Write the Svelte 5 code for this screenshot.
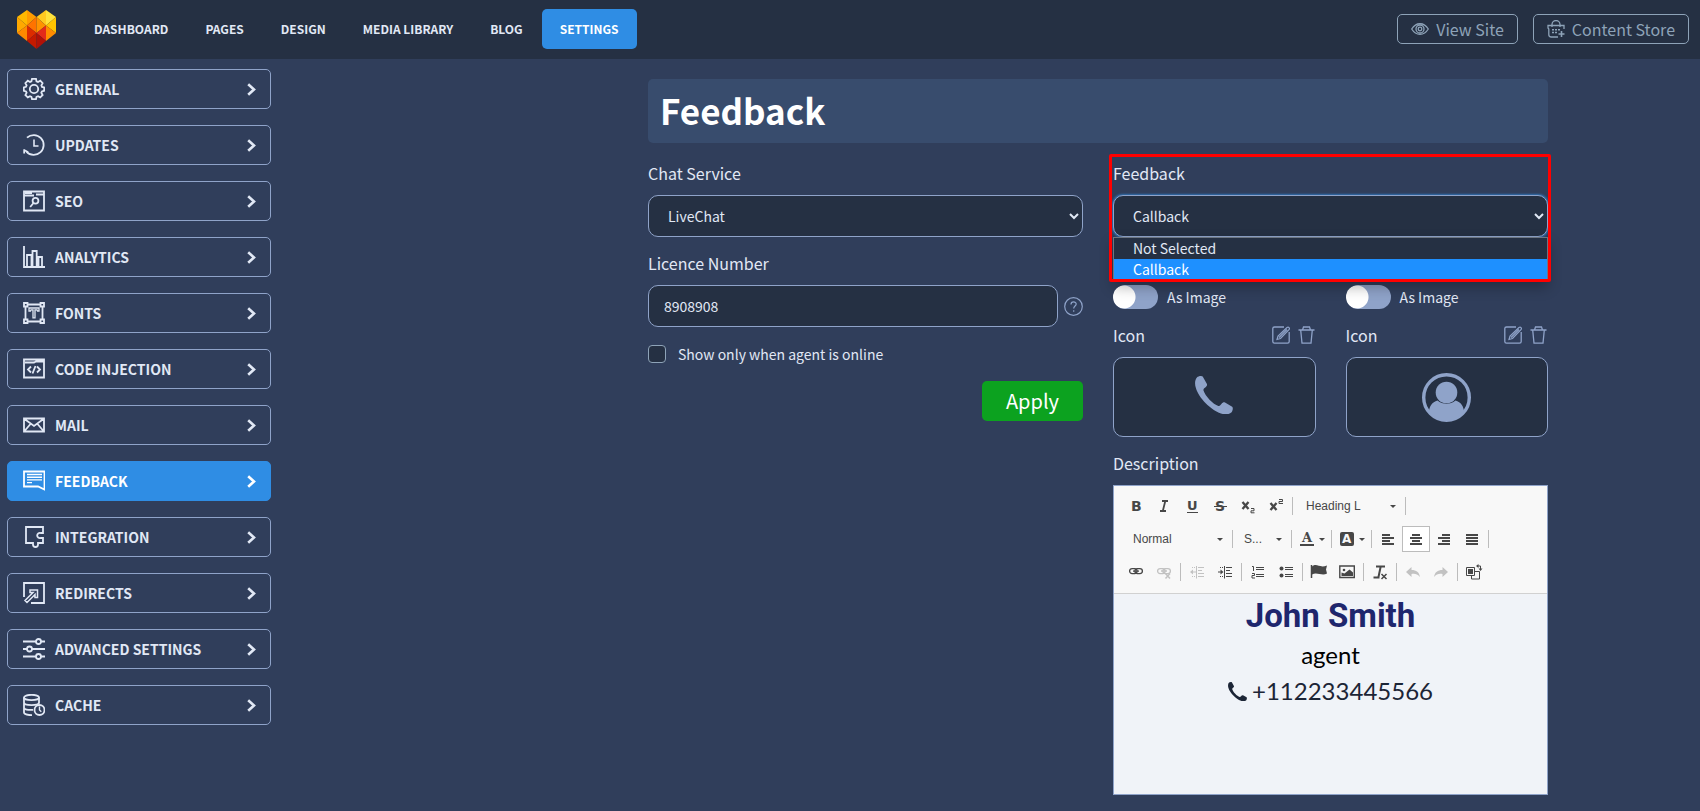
<script>
  const nav = ['Dashboard', 'Pages', 'Design', 'Media Library', 'Blog', 'Settings'];

  const sections = [
    { name: 'General', icon: '<path d="M9 .9h4l.5 2.400 1.500.7 2.300-1.300 2.300 2.400-1.200 2.300.6 1.500 2.200.6v3.200l-2.300.7-.6 1.400 1.300 2.300-2.400 2.300-2.200-1.200-1.500.6-.5 2.300H9l-.6-2.300-1.400-.6-2.200 1.200-2.400-2.300 1.200-2.300-.6-1.400-2.200-.6V9.400l2.200-.6.6-1.500-1.200-2.200 2.400-2.400L7 4l1.400-.7z"/><circle cx="11" cy="11" r="4.200"/>' },
    { name: 'Updates', icon: '<path d="M4 3.700A9.900 9.900 0 1 1 3.600 17.800"/><path d="M1.200 15.300v4.200M1.200 16l4 2.200"/><path d="M11 5.500V12h4.500" stroke-width="1.600"/>' },
    { name: 'SEO', icon: '<path d="M1 1.500h20v19H1zM1 5.500h10M13 4.500h8M2 3.200h7" /><circle cx="12.500" cy="10.800" r="2.900"/><path d="m10.500 13-3.300 4"/>' },
    { name: 'Analytics', icon: '<path d="M1 0v21h21M4 21V9h4.500v12M9.500 21V5h4.200v16M15.500 21V11H19v10"/>' },
    { name: 'Fonts', icon: '<path d="M1 1h3.500v3.500H1zM17.500 1H21v3.500h-3.500zM1 17.500h3.500V21H1zM17.500 17.500H21V21h-3.500zM4.500 2.500h13M4.500 19.500h13M2.500 4.500v13M19.500 4.500v13"/><path d="M6 6h10v3h-1.500l-.5-1.200h-2v8h-2v-8H8L7.500 9H6z" stroke-width="1.300"/>' },
    { name: 'Code Injection', icon: '<path d="M1 1.500h20v18H1zM2 4.500h9l2-1h8" /><path d="m8 8.500-3 3 3 3M14 8.500l3 3-3 3M12.500 8l-3 7.500"/>' },
    { name: 'Mail', icon: '<path d="M1 4.500h20v13H1zM1.500 5l9.500 7 9.500-7M1.500 17l6-7M20.500 17l-6-7"/>' },
    { name: 'Feedback', icon: '<path d="M1 1.500h20.500v18L15 16.500H1z"/><path d="M4 4.500h15M4 7.200h15M4 9.900h15M4 12.600h5" stroke-width="1.400"/>' },
    { name: 'Integration', icon: '<path d="M3 1h17v6h-2.500a2.600 2.600 0 1 0 0 5H20v5h-5v1.500a2.500 2.500 0 0 1-5 0V17H3z"/>' },
    { name: 'Redirects', icon: '<path d="M1 15V1h20v20H8"/><path d="m2 18.500 8-8H7V8h7.500v7.500H12v-3l-8 8z" stroke-width="1.500"/>' },
    { name: 'Advanced Settings', icon: '<path d="M0 3.500h13M18 3.500h4M0 11h4M9 11h13M0 18.500h13M18 18.500h4"/><circle cx="15.500" cy="3.500" r="2.500"/><circle cx="6.500" cy="11" r="2.500"/><circle cx="15.500" cy="18.500" r="2.500"/>' },
    { name: 'Cache', icon: '<ellipse cx="8.500" cy="3.500" rx="7.500" ry="2.700"/><path d="M1 3.500v15c0 1.500 3.500 2.700 8 2.700M16 3.500v6M1 8.500c0 3.500 15 3.500 15 0M1 13.500c0 2 4 2.700 9 2.300"/><circle cx="16.500" cy="16" r="5"/><path d="M16.500 12.500V16l1.800 1.800" stroke-width="1.400"/>' }
  ];

  const text = 'font-family="DejaVu Sans, sans-serif" font-weight="bold" fill="currentColor"';
  const lines = (rows) => rows.map(([x, w], i) => `<path d="M${x} ${4 + i * 3}h${w}" stroke="currentColor" stroke-width="2"/>`).join('');

  const toolbar = [
    [
      { label: 'Bold', icon: `<text x="3" y="13" font-size="14" ${text}>B</text>` },
      { label: 'Italic', icon: `<path d="M6 3h6M4 13h6M9.300 3 6.800 13" stroke="currentColor" stroke-width="1.800"/>` },
      { label: 'Underline', icon: `<text x="3" y="12" font-size="13" ${text}>U</text><path d="M3 14.500h11" stroke="currentColor"/>` },
      { label: 'Strikethrough', icon: `<text x="3" y="13" font-size="14" ${text}>S</text><path d="M2 8.500h13" stroke="currentColor"/>` },
      { label: 'Subscript', icon: `<path d="m2.500 4 6 7M8.500 4l-6 7" stroke="currentColor" stroke-width="2.300"/><path d="M11 10.500h3v2.300h-3v2h3.500" stroke="currentColor"/>` },
      { label: 'Superscript', icon: `<path d="m2.500 5 6 7M8.500 5l-6 7" stroke="currentColor" stroke-width="2.300"/><path d="M11 1.500h3.500v2h-3.500v2h4" stroke="currentColor"/>` },
      { sep: true },
      { combo: 'Heading L', label: 'Font' },
      { sep: true }
    ],
    [
      { combo: 'Normal', label: 'Paragraph format' },
      { sep: true },
      { combo: 'S...', label: 'Size', small: true },
      { sep: true },
      { label: 'Text color', menu: true, icon: `<text x="3" y="11" font-size="13" font-family="DejaVu Serif, serif" font-weight="bold" fill="currentColor">A</text><path d="M1 14h14" stroke="currentColor" stroke-width="2"/>` },
      { sep: true },
      { label: 'Background color', menu: true, icon: `<rect x="1" y="1" width="14" height="14" rx="2" fill="currentColor"/><text x="3" y="12" font-size="12" font-family="DejaVu Sans, sans-serif" font-weight="bold" fill="#f8f8f8">A</text>` },
      { sep: true },
      { label: 'Align left', icon: lines([[2, 8], [2, 12], [2, 8], [2, 12]]) },
      { label: 'Center', on: true, icon: lines([[4, 8], [2, 12], [4, 8], [2, 12]]) },
      { label: 'Align right', icon: lines([[6, 8], [2, 12], [6, 8], [2, 12]]) },
      { label: 'Justify', icon: lines([[2, 12], [2, 12], [2, 12], [2, 12]]) },
      { sep: true }
    ],
    [
      { label: 'Link', icon: '<rect x="1.600" y="4.600" width="7.500" height="5" rx="2.500" stroke="currentColor" stroke-width="1.300"/><rect x="6.900" y="4.600" width="7.500" height="5" rx="2.500" stroke="currentColor" stroke-width="1.300"/><path d="M5 7.100h6" stroke="currentColor" stroke-width="1.300"/>' },
      { label: 'Unlink', off: true, icon: '<rect x="1.600" y="4.600" width="7.500" height="5" rx="2.500" stroke="currentColor" stroke-width="1.300"/><rect x="6.900" y="4.600" width="7.500" height="5" rx="2.500" stroke="currentColor" stroke-width="1.300"/><path d="M5 7.100h6M9.500 9.500l4.500 5M14 9.500l-4.500 5" stroke="currentColor" stroke-width="1.500"/>' },
      { sep: true },
      { label: 'Outdent', off: true, icon: '<path d="M7.500 2v12.500" stroke="currentColor"/><path d="M9 3.500h6M9 6.500h4M9 9.500h6M9 12.500h6M3 3.500h1M5 3.500h1M3 12.500h1M5 12.500h1M2 8h5" stroke="currentColor"/><path d="M1 8l3-2.500v5z" fill="currentColor"/>' },
      { label: 'Indent', icon: '<path d="M7.500 2v12.500" stroke="currentColor"/><path d="M9 3.500h6M9 6.500h4M9 9.500h6M9 12.500h6M3 3.500h1M5 3.500h1M3 12.500h1M5 12.500h1M1 8h4" stroke="currentColor"/><path d="M6.500 8l-3-2.500v5z" fill="currentColor"/>' },
      { sep: true },
      { label: 'Numbered list', icon: '<path d="M2 2.500h1.500V7M2 9.500h2.500v2H2v2.500h3M6 3.500h8M6 5.500h8M6 10.500h8M6 12.500h8" stroke="currentColor"/>' },
      { label: 'Bulleted list', icon: '<circle cx="3.500" cy="4.600" r="2" fill="currentColor"/><circle cx="3.500" cy="11.600" r="2" fill="currentColor"/><path d="M7 3.500h8M7 5.500h8M7 10.500h8M7 12.500h8" stroke="currentColor"/>' },
      { sep: true },
      { label: 'Anchor', icon: '<path d="M.5 1v13" stroke="currentColor" stroke-width="1.500"/><path d="M1 2.500c5-4 7 2 15-1l-1 4 1 4c-5 3-10-2-15 1z" fill="currentColor"/>' },
      { label: 'Image', icon: '<path d="M.8 2h14.500v11.500H.8z" stroke="currentColor" stroke-width="1.400"/><path d="M2.500 12V8.500l3 1 5-4 3.500 3V12z" fill="currentColor"/><circle cx="5" cy="6" r="1.300" fill="currentColor"/>' },
      { sep: true },
      { label: 'Remove format', icon: '<path d="M4 2.500h9M8.800 2 6.500 13M1.500 13.500h6" stroke="currentColor" stroke-width="2"/><path d="m9.500 10 5 5M14.500 10l-5 5" stroke="currentColor" stroke-width="1.500"/>' },
      { sep: true },
      { label: 'Undo', off: true, icon: '<path d="M1 8l5.500-5v3c5 0 7.500 2 8.500 7-2.500-3-5-3.500-8.500-3v3z" fill="currentColor"/>' },
      { label: 'Redo', off: true, icon: '<path d="M15 8 9.500 3v3C4.500 6 2 8 1 13c2.500-3 5-3.500 8.500-3v3z" fill="currentColor"/>' },
      { sep: true },
      { label: 'Replace', icon: '<path d="M.5 3.500h8v8h-8zM9 7.500h4.500v7.500h-8v-3.500M11 2h3.500v4" stroke="currentColor"/><path d="M2 5h5v5H2zM10 2l2.500-2v4zM14.500 7l-2-2.500h4z" fill="currentColor"/>' }
    ]
  ];

  const phone = 'M2.100 1.200C3.300.2 6.600-.6 7.700.6l4.100 7.200c.7 1.200-.2 2.500-1 3.200-1.100 1-2.700 1.800-2.300 3.400 1.500 5.200 9.700 14 14.900 15.500 1.600.4 2.400-1.200 3.400-2.300.7-.8 2-1.700 3.200-1l7.200 4.100c1.200 1.100.4 4.400-.6 5.600-2.500 2.400-6.700 2.500-10.700 1.200C16 34.300 3.700 22 .9 12.100-.4 8.100-.3 3.700 2.100 1.200z';
  const channels = [
    { id: 'phone-image', kind: 'phone' },
    { id: 'agent-image', kind: 'agent' }
  ];
  const feedbackOptions = ['Not Selected', 'Callback'];
  let feedback = $state('Callback');
  let licence = $state('8908908');
</script>

<header>
  <a class="logo" href="#home" aria-label="Home">
    <svg width="39" height="39" viewBox="0 0 39 39">
      <path d="M0 7 10 0v15.500z" fill="#ffb800" /><path d="M10 0l9.500 7-9.500 8.500z" fill="#ff9c00" />
      <path d="M0 7l10 8.500L0 23z" fill="#ffa800" /><path d="M0 23l10-7.500V31z" fill="#ff8a00" />
      <path d="M19.500 7 29 0v15.500z" fill="#ffc91f" /><path d="M29 0l10 7-10 8.500z" fill="#ffe23c" />
      <path d="M39 7v16l-10-7.500z" fill="#ffc400" /><path d="M39 23 29 31V15.500z" fill="#ff8c00" />
      <path d="M19.500 7v16L10 15.500z" fill="#ff7300" /><path d="M19.500 7 29 15.500 19.500 23z" fill="#ff9300" />
      <path d="M10 15.500 19.500 23 10 31z" fill="#dc2c00" /><path d="M29 15.500V31l-9.500-8z" fill="#e32b1a" />
      <path d="M10 31l9.500-8v16z" fill="#c41a00" /><path d="M29 31l-9.500-8v16z" fill="#b01208" />
    </svg>
  </a>
  <nav aria-label="Main">
    {#each nav as item}
      <a href="#{item}" class:active={item === 'Settings'}>{item}</a>
    {/each}
  </nav>
  <div class="actions">
    <a href="#view">
      <svg width="18" height="18" viewBox="0 0 18 18">
        <path d="M.7 9C5 2 13 2 17.300 9 13 16 5 16 .7 9z" /><circle cx="9" cy="9" r="4" /><circle cx="9" cy="9" r="1.800" />
      </svg>
      View Site
    </a>
    <a href="#store">
      <svg width="18" height="18" viewBox="0 0 18 18">
        <path d="M5 7V4.500a4 4 0 0 1 8 0V7M17 9V5.500H1V8l.8 1v5.500c0 1.500 1 2.500 2.500 2.500H11" />
        <path d="M5 9.800h2M8 9.800h2M11 9.800h2M5 12.500h2M8 12.500h2" stroke-width="1.600" /><path d="M11.500 14h6M14.500 11v6" stroke-width="1.600" />
      </svg>
      Content Store
    </a>
  </div>
</header>

<div class="body">
  <aside>
    {#each sections as s}
      <a href="#{s.name}" class:active={s.name === 'Feedback'}>
        <svg class="glyph" width="22" height="22" viewBox="0 0 22 22">{@html s.icon}</svg>
        <span>{s.name}</span>
        <svg class="chevron" width="9" height="13" viewBox="0 0 9 13"><path d="M1.200 1.200 7 6.500l-5.800 5.300" /></svg>
      </a>
    {/each}
  </aside>

  <main>
    <h1>Feedback</h1>
    <div class="columns">
      <form onsubmit={(e) => e.preventDefault()}>
        <div class="field">
          <label for="chat">Chat Service</label>
          <select id="chat"><option>LiveChat</option></select>
        </div>
        <div class="field">
          <label for="licence">Licence Number</label>
          <div class="with-help">
            <input id="licence" type="text" bind:value={licence} />
            <button type="button" class="help" aria-label="Help">
              <svg width="19" height="19" viewBox="0 0 19 19">
                <circle cx="9.500" cy="9.500" r="8.800" /><path d="M7 7.500c0-3.500 5.200-3.200 5.200-.4 0 2-2.500 2-2.500 4.400M9.700 13.200v1.500" />
              </svg>
            </button>
          </div>
        </div>
        <div class="check">
          <input id="online" type="checkbox" />
          <label for="online">Show only when agent is online</label>
        </div>
        <button class="apply" type="submit">Apply</button>
      </form>

      <section>
        <div class="field open">
          <label for="feedback">Feedback</label>
          <select id="feedback" bind:value={feedback}>
            {#each feedbackOptions as o}<option>{o}</option>{/each}
          </select>
          <ul role="listbox" aria-label="Feedback">
            {#each feedbackOptions as o}
              <li role="option" aria-selected={o === feedback}>{o}</li>
            {/each}
          </ul>
          <div class="outline"></div>
        </div>

        <div class="channels">
          {#each channels as c}
            <div class="channel">
              <div class="toggle">
                <input id={c.id} type="checkbox" role="switch" />
                <label for={c.id}>As Image</label>
              </div>
              <div class="field">
                <div class="icon-head">
                  <span>Icon</span>
                  <button type="button" aria-label="Edit icon">
                    <svg width="18" height="18" viewBox="0 0 18 18">
                      <path d="M12 1H2.500C1.500 1 .8 1.500.8 2.500v13c0 1 .7 1.700 1.700 1.700h13c1 0 1.700-.7 1.700-1.700V6" />
                      <path d="M5 13.500 6 10 15 1.500c1.500-1 3.200.6 2 2.200L8.500 12.500zM7 11.500l8-8" stroke-width="1.200" />
                    </svg>
                  </button>
                  <button type="button" aria-label="Delete icon">
                    <svg width="17" height="18" viewBox="0 0 17 18">
                      <path d="M.5 4h16M4.500 4l1-3h6l1 3M2.700 4l1.300 13.200h9L14.300 4" />
                    </svg>
                  </button>
                </div>
                <div class="preview">
                  {#if c.kind === 'phone'}
                    <svg class="phone" width="38" height="38" viewBox="0 0 38 38"><path d={phone} /></svg>
                  {:else}
                    <svg width="49" height="49" viewBox="0 0 49 49">
                      <circle cx="24.500" cy="24.500" r="22.800" fill="none" stroke="currentColor" stroke-width="3.400" />
                      <circle cx="24.500" cy="19.500" r="10.800" />
                      <path d="M7 38.500c.3-5 3-9.500 8.500-11 5.200 4.300 12.800 4.300 18 0 5.500 1.500 8.200 6 8.500 11C38 44 31.500 47.500 24.500 47.500S11 44 7 38.500z" />
                    </svg>
                  {/if}
                </div>
              </div>
            </div>
          {/each}
        </div>

        <div class="field">
          <span class="caption" id="desc">Description</span>
          <div class="editor" role="group" aria-labelledby="desc">
            <div class="toolbar">
              {#each toolbar as row}
                <div class="tools">
                  {#each row as t}
                    {#if t.sep}
                      <span class="sep"></span>
                    {:else if t.combo}
                      <span class="combo" class:small={t.small}>
                        <select aria-label={t.label}><option>{t.combo}</option></select>
                      </span>
                    {:else}
                      <button type="button" class:on={t.on} class:menu={t.menu} disabled={t.off} aria-label={t.label}>
                        <svg width="16" height="16" viewBox="0 0 16 16" fill="none" overflow="visible">{@html t.icon}</svg>
                      </button>
                    {/if}
                  {/each}
                </div>
              {/each}
            </div>
            <div class="document">
              <h2>John Smith</h2>
              <p>agent</p>
              <p class="number">
                <svg width="19" height="19" viewBox="0 0 38 38"><path d={phone} /></svg>
                +112233445566
              </p>
            </div>
          </div>
        </div>
      </section>
    </div>
  </main>
</div>

<style>
  :global(body) {
    background: #303e5b;
    color: #e1e8f5;
    font: 14px/22px 'Noto Sans CJK SC', 'Noto Sans', sans-serif;
  }
  * { box-sizing: border-box; }
  a { color: inherit; text-decoration: none; }
  button { font: inherit; cursor: pointer; }
  svg { display: block; flex: none; }

  header {
    display: flex;
    align-items: center;
    height: 59px;
    padding: 0 11px 1px 17px;
    background: #253043;
  }
  nav { display: flex; gap: 1px; margin-left: 20px; }
  nav a {
    height: 40px;
    padding: 0 18px;
    border-radius: 5px;
    font-size: 12px;
    line-height: 40px;
    font-weight: 700;
    text-transform: uppercase;
  }
  nav a.active { background: #2f8de4; color: #fff; }
  .actions { display: flex; gap: 15px; margin-left: auto; }
  .actions a {
    display: flex;
    align-items: center;
    gap: 7px;
    height: 30px;
    padding: 0 13px;
    border: 1px solid #8ea3b8;
    border-radius: 5px;
    color: #8ea3b8;
    font-size: 16px;
  }
  .actions svg { fill: none; stroke: currentColor; stroke-width: 1.3; }

  .body {
    display: grid;
    grid-template-columns: 264px minmax(0, 1fr);
    column-gap: 232px;
    padding: 10px 7px 16px;
  }
  aside { display: flex; flex-direction: column; gap: 16px; }
  aside a {
    display: flex;
    align-items: center;
    gap: 10px;
    height: 40px;
    padding: 0 14px 0 15px;
    border: 1px solid #8fa3c9;
    border-radius: 5px;
    font-weight: 700;
    text-transform: uppercase;
  }
  aside a.active { background: #2f8de4; border-color: #2f8de4; color: #fff; }
  aside span { flex: 1; }
  .glyph { fill: none; stroke: currentColor; stroke-width: 1.8; }
  .chevron { fill: none; stroke: currentColor; stroke-width: 2.6; }

  main {
    width: 100%;
    max-width: 900px;
    margin: 10px auto 0;
  }
  h1 {
    height: 64px;
    margin: 0 0 19px;
    padding: 0 12px;
    border-radius: 5px;
    background: #384c6d;
    color: #fff;
    font-size: 35px;
    line-height: 62px;
    font-weight: 700;
  }
  .columns { display: grid; grid-template-columns: 1fr 1fr; gap: 30px; }
  form, section { display: flex; flex-direction: column; gap: 15px; min-width: 0; }
  .field { display: flex; flex-direction: column; gap: 11px; }
  .field > label, .caption, .icon-head { font-size: 16px; }
  .field > select, .with-help input {
    width: 100%;
    height: 42px;
    padding: 0 15px;
    border: 1px solid #8fa3c9;
    border-radius: 10px;
    background: #253043;
    color: inherit;
    font: inherit;
  }
  .with-help { display: flex; align-items: center; gap: 6px; }
  .with-help input { flex: 1; min-width: 0; }
  .help { padding: 0; border: 0; background: none; color: #8fa3c9; }
  .help svg { fill: none; stroke: currentColor; stroke-width: 1.2; }
  .check { display: flex; align-items: center; gap: 12px; height: 24px; }
  .check input {
    appearance: none;
    width: 18px;
    height: 18px;
    margin: 0;
    border: 1px solid #8ea3b8;
    border-radius: 4px;
    background: #253043;
  }
  .apply {
    align-self: flex-end;
    height: 40px;
    padding: 0 24px;
    border: 0;
    border-radius: 5px;
    background: #0ca21f;
    color: #fff;
    font-size: 20px;
  }

  .open { position: relative; margin-bottom: 33px; }
  .open select { box-shadow: 0 0 2px 1px #2f6fae; }
  .open ul {
    position: absolute;
    top: 100%;
    left: 0;
    right: 0;
    margin: 0;
    padding: 0;
    list-style: none;
    border: 1px solid #6d7682;
    background: #253043;
    box-shadow: 0 6px 14px rgba(0, 0, 0, 0.3);
  }
  .open li { height: 21px; padding: 0 19px; line-height: 21px; }
  .open li[aria-selected='true'] { background: #1e90ff; color: #fff; }
  .outline {
    position: absolute;
    inset: -8px -3px -45px -4px;
    border: 3px solid #f00;
    border-radius: 2px;
    pointer-events: none;
  }

  .channels { display: grid; grid-template-columns: 1fr 1fr; gap: 30px; }
  .channel { display: flex; flex-direction: column; gap: 15px; }
  .toggle { display: flex; align-items: center; gap: 9px; }
  .toggle input {
    appearance: none;
    width: 45px;
    height: 24px;
    margin: 0;
    border-radius: 12px;
    background: radial-gradient(circle at 11px 12px, #fff 11px, #8fa3c9 12px);
  }
  .icon-head { display: flex; align-items: center; gap: 8px; height: 22px; padding-right: 1px; }
  .icon-head span { flex: 1; }
  .icon-head button { padding: 0; border: 0; background: none; color: #8fa3c9; }
  .icon-head svg { fill: none; stroke: currentColor; stroke-width: 1.3; }
  .preview {
    display: flex;
    align-items: center;
    justify-content: center;
    height: 80px;
    border: 1px solid #8fa3c9;
    border-radius: 10px;
    background: #253043;
    color: #8fa3c9;
  }
  .preview svg { fill: currentColor; }
  .preview .phone { margin-bottom: 4px; }

  .editor { border: 1px solid #8fa3c9; background: #f0f3f8; }
  .toolbar {
    display: flex;
    flex-direction: column;
    gap: 7px;
    padding: 7px 8px 8px;
    border-bottom: 1px solid #d1d1d1;
    background: #f8f8f8;
    color: #474747;
  }
  .tools { display: flex; align-items: center; height: 26px; }
  .tools button {
    display: flex;
    align-items: center;
    justify-content: center;
    width: 28px;
    height: 26px;
    padding: 0;
    border: 1px solid transparent;
    background: none;
    color: inherit;
  }
  .tools button:disabled { color: #c2c2c2; }
  .tools button.on { border-color: #bcbcbc; background: #fff; }
  .tools button.menu { width: 35px; gap: 4px; }
  .sep { width: 1px; height: 18px; margin: 0 2px; background: #bcbcbc; }
  .combo { position: relative; width: 108px; }
  .combo.small { width: 54px; }
  .combo select {
    appearance: none;
    display: block;
    width: 100%;
    height: 26px;
    padding: 0 11px;
    border: 0;
    background: none;
    color: #474747;
    font: 12px/26px 'Liberation Sans', Arial, sans-serif;
  }
  .combo.small select { padding: 0 9px; }
  .combo::after, .menu::after {
    content: '';
    border: 3px solid transparent;
    border-top-color: #474747;
    border-bottom: 0;
  }
  .combo::after { position: absolute; top: 12px; right: 7px; pointer-events: none; }

  .document {
    min-height: 200px;
    color: #000;
    text-align: center;
    font: 24px/36px Lato, sans-serif;
  }
  h2 {
    margin: 0;
    color: #1e266d;
    font: 700 33px/43px Roboto, sans-serif;
  }
  p { margin: 0; }
  .number {
    display: flex;
    align-items: center;
    justify-content: center;
    gap: 5px;
    color: #1c2536;
  }
  .number svg { fill: currentColor; }
</style>
